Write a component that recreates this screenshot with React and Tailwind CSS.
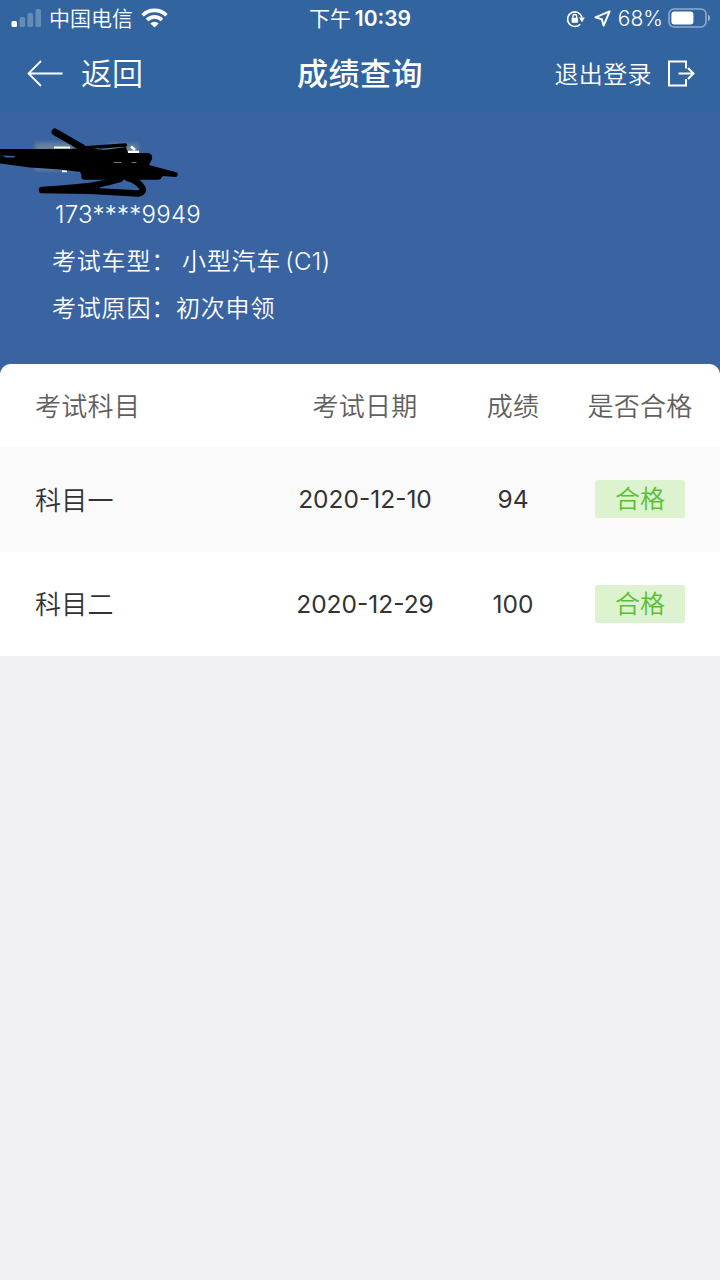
import React from 'react';

const results = [
  { subject: '科目一', date: '2020-12-10', score: 94, status: '合格' },
  { subject: '科目二', date: '2020-12-29', score: 100, status: '合格' },
];

const StatusBar = () => (
  <div className="grid h-[37px] grid-cols-[1fr_auto_1fr] items-center text-[21px] leading-9">
    <div className="flex items-center pl-[11px]">
      <svg className="-mt-px h-[19px] w-[31px]" viewBox="0 0 31 19" fill="#fff">
        <rect x="0.5" y="12" width="5.5" height="6" rx="1.5" />
        <rect x="8.5" y="8" width="5.5" height="10" rx="1.5" opacity="0.25" />
        <rect x="16.5" y="4" width="5.5" height="14" rx="1.5" opacity="0.25" />
        <rect x="24.5" y="0" width="5.5" height="18" rx="1.5" opacity="0.25" />
      </svg>
      <span className="mt-px ml-[7px] font-[350]">中国电信</span>
      <svg className="-mt-0.5 ml-2 h-[20px] w-[27px]" viewBox="0 0 27 20" fill="none" stroke="#fff" strokeWidth="3.6">
        <path d="M1.6 7.2a17 17 0 0 1 23.8 0" />
        <path d="M6 12a10.6 10.6 0 0 1 15 0" />
        <path d="M13.5 19.6l-4.2-4.2a6 6 0 0 1 8.4 0z" fill="#fff" stroke="none" />
      </svg>
    </div>
    <div className="pt-px">
      下午 <span className="-ml-0.5 font-semibold">10:39</span>
    </div>
    <div className="flex items-center justify-end pr-[9px]">
      <svg className="h-[18px] w-[19px]" viewBox="0 0 19 18" fill="none" stroke="#fff" strokeWidth="1.6">
        <path d="M14.2 14.2a7.3 7.3 0 1 1 1.8-6.7" />
        <path d="M13 7.6h5.8l-2.8 4.6z" fill="#fff" stroke="none" />
        <rect x="5.6" y="7.8" width="6.4" height="5" rx="0.8" fill="#fff" stroke="none" />
        <path d="M6.9 8.4V6.4a1.9 1.9 0 0 1 3.8 0v2" strokeWidth="1.3" />
      </svg>
      <svg className="ml-[9px] h-[17px] w-[17px]" viewBox="0 0 17 17" fill="none" stroke="#fff" strokeWidth="2" strokeLinejoin="round">
        <path d="M15.6 1.4L1.4 7.4l6.4 1.8 1.8 6.4z" />
      </svg>
      <span className="ml-[7px] text-[21px] font-[350]">68%</span>
      <svg className="-mt-px ml-[5px] h-[20px] w-[43px]" viewBox="0 0 43 20" fill="none">
        <rect x="1" y="1" width="37" height="18" rx="5" stroke="#fff" strokeOpacity="0.45" strokeWidth="1.6" />
        <rect x="3.4" y="3.4" width="22" height="13.2" rx="3" fill="#fff" />
        <path d="M40 6.8c2.8 1 2.8 5.4 0 6.4z" fill="#fff" fillOpacity="0.5" />
      </svg>
    </div>
  </div>
);

const NavBar = () => (
  <div className="grid h-[72px] grid-cols-[1fr_auto_1fr] items-center pr-[25px] pl-[27px]">
    <div className="flex items-center">
      <svg className="h-[27px] w-9" viewBox="0 0 36 27" fill="none" stroke="#fff" strokeWidth="1.8">
        <path d="M35.5 13.5H1.5M14 1L1.5 13.5L14 26" />
      </svg>
      <span className="mt-0.5 ml-[18px] text-[31px] font-[350]">返回</span>
    </div>
    <h1 className="mt-0.5 -ml-0.5 text-[31px] font-medium tracking-[0.5px]">成绩查询</h1>
    <div className="flex items-center justify-end">
      <span className="mt-[3px] text-[24px] font-[350] tracking-[0.4px]">退出登录</span>
      <svg className="ml-[15px] h-[27px] w-[28px]" viewBox="0 0 28 27" fill="none" stroke="#fff" strokeWidth="2">
        <path d="M19 8.5V1.5H2v24h17v-6.5" />
        <path d="M11.5 13.5h15M21 8l5.5 5.5L21 19" />
      </svg>
    </div>
  </div>
);

// Name line, crossed out by hand
const HiddenName = () => (
  <svg className="absolute top-0 left-0 h-[90px] w-[190px]" viewBox="0 112 190 90" fill="none" stroke="#000" strokeLinecap="round" strokeLinejoin="round">
    <defs>
      <filter id="smudge">
        <feGaussianBlur stdDeviation="2" />
      </filter>
    </defs>
    <path d="M35 143h38v26H35zM108 144h30v14h-30zM35 164h48v6H35z" fill="#8f9a96" fillOpacity="0.6" stroke="none" filter="url(#smudge)" />
    <path d="M54 147.5h16M92 148h7" stroke="#f4f4ea" strokeWidth="2" strokeLinecap="butt" />
    <path d="M131 146.5l4 3.5M128 152h11" stroke="#fff" strokeWidth="2.5" strokeLinecap="butt" />
    <path d="M62 171.3h5M78 171h4" stroke="#fff" strokeWidth="2" strokeLinecap="butt" />
    <path
      d="M-4 149L52 149L70 149L88 148L104 150L126 147L128 153L148 153Q153 154 152 159L149 165L177 172.5Q179 175 176 177L163 176L160 179H84L80 172L60 169.5L30 167.5L-4 163zM2 155.500L6 157.500H14L15.500 156z"
      fill="#000"
      fillRule="evenodd"
      stroke="none"
    />
    <path d="M55 132L82 147.5" strokeWidth="7" />
    <path d="M82 148L104 146.5L125.5 145" strokeWidth="3.5" />
    <path d="M148 168L175 174.5" strokeWidth="4.5" />
    <path d="M84.5 176.5L158 176.5" strokeWidth="6.5" />
    <path d="M120 179Q100 185 80 187Q60 189 42 190Q90 190 138 193.5Q146 192 141 186Q136 180 128 178" strokeWidth="6.5" />
    <path d="M82 189L104 184L96 189z" fill="#000" strokeWidth="2" />
    <path d="M114 162.5h7M132 162.5h4" stroke="#a9aba2" strokeOpacity="0.7" strokeWidth="1" />
  </svg>
);

const StatusBadge = ({ children }) => (
  <span className="flex h-[38px] w-[90px] items-center justify-center rounded-[3px] bg-[#ddf3cf] pt-px text-[25px] font-[350] text-[#5abf31]">
    {children}
  </span>
);

export default function App() {
  return (
    <div className="flex h-[1280px] w-[720px] flex-col overflow-hidden bg-[#f0f0f5] font-['Inter','Noto_Sans_CJK_SC',sans-serif] text-white">
      <header className="h-[112px] bg-[#32649f]">
        <StatusBar />
        <NavBar />
      </header>

      <section className="relative h-[262px] bg-[#3a64a1] pt-[85px] text-[24px] font-[350]">
        <HiddenName />
        <div className="h-9 pl-[55px] leading-9 tracking-[0.25px]">173****9949</div>
        <div className="mt-[11px] h-9 pl-[52px] leading-9 tracking-[0.8px]">
          考试车型：<span className="ml-1.5">小型汽车</span>
          <span className="ml-1 tracking-[0.4px]">(C1)</span>
        </div>
        <div className="mt-[11px] h-9 pl-[52px] leading-9 tracking-[0.8px]">考试原因：初次申领</div>
      </section>

      <main className="relative -mt-[10px] overflow-hidden rounded-t-[11px] bg-white text-[26px] text-[#333]">
        <div className="grid h-[83px] grid-cols-[283px_164px_132px_122px] items-center pt-0.5 text-center font-[350] tracking-[0.3px] text-[#606060]">
          <div className="pl-[35px] text-left">考试科目</div>
          <div>考试日期</div>
          <div>成绩</div>
          <div>是否合格</div>
        </div>
        {results.map((row) => (
          <div
            key={row.subject}
            className="grid h-[104.5px] grid-cols-[283px_164px_132px_122px] items-center text-center odd:bg-white even:bg-[#fafafa]"
          >
            <div className="pt-0.5 pl-[35px] text-left font-[350] tracking-[0.2px]">{row.subject}</div>
            <div className="pt-px text-[24.5px]">{row.date}</div>
            <div className="pt-px text-[24.5px]">{row.score}</div>
            <div className="flex justify-center">
              <StatusBadge>{row.status}</StatusBadge>
            </div>
          </div>
        ))}
      </main>
    </div>
  );
}
